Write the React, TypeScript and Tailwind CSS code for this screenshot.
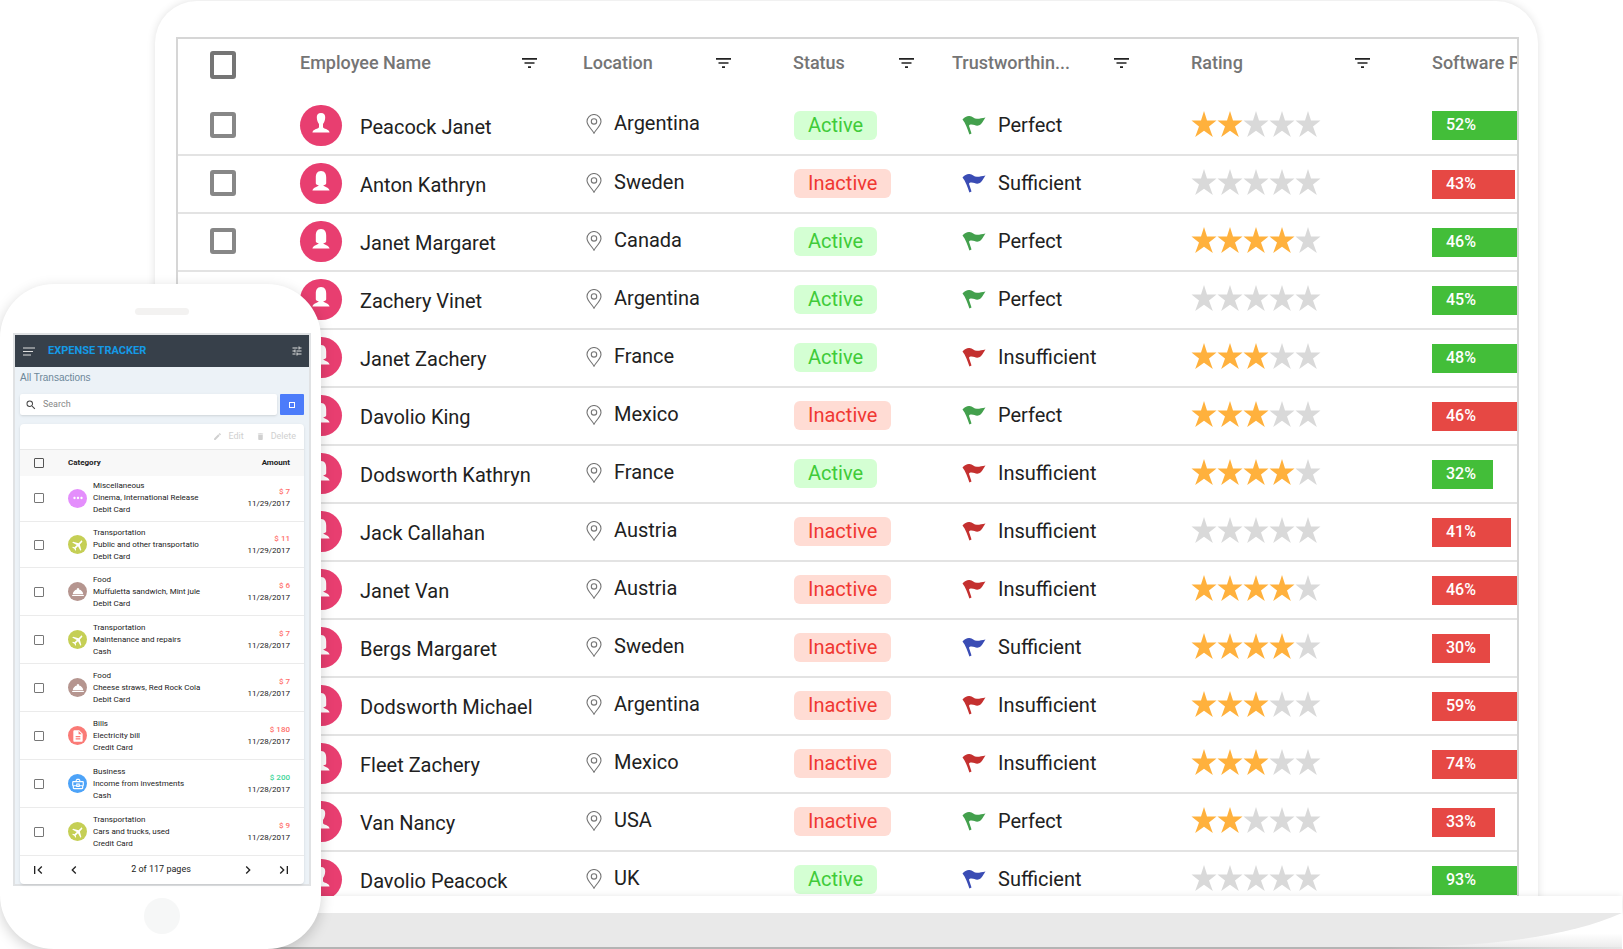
import React from "react";
import {
  MdAirplanemodeActive,
  MdChevronLeft,
  MdChevronRight,
  MdDelete,
  MdDescription,
  MdEdit,
  MdFirstPage,
  MdLastPage,
  MdMoreHoriz,
  MdOutlineBusinessCenter,
  MdRoomService,
  MdSearch,
  MdTune,
} from "react-icons/md";

type Employee = {
  name: string;
  male?: boolean;
  location: string;
  active: boolean;
  trust: "Perfect" | "Sufficient" | "Insufficient";
  rating: number;
  software: number;
  good: boolean;
};

const employees: Employee[] = [
  { name: "Peacock Janet", male: true, location: "Argentina", active: true, trust: "Perfect", rating: 2, software: 52, good: true },
  { name: "Anton Kathryn", location: "Sweden", active: false, trust: "Sufficient", rating: 0, software: 43, good: false },
  { name: "Janet Margaret", location: "Canada", active: true, trust: "Perfect", rating: 4, software: 46, good: true },
  { name: "Zachery Vinet", location: "Argentina", active: true, trust: "Perfect", rating: 0, software: 45, good: true },
  { name: "Janet Zachery", location: "France", active: true, trust: "Insufficient", rating: 3, software: 48, good: true },
  { name: "Davolio King", location: "Mexico", active: false, trust: "Perfect", rating: 3, software: 46, good: false },
  { name: "Dodsworth Kathryn", location: "France", active: true, trust: "Insufficient", rating: 4, software: 32, good: true },
  { name: "Jack Callahan", location: "Austria", active: false, trust: "Insufficient", rating: 0, software: 41, good: false },
  { name: "Janet Van", location: "Austria", active: false, trust: "Insufficient", rating: 4, software: 46, good: false },
  { name: "Bergs Margaret", location: "Sweden", active: false, trust: "Sufficient", rating: 4, software: 30, good: false },
  { name: "Dodsworth Michael", location: "Argentina", active: false, trust: "Insufficient", rating: 3, software: 59, good: false },
  { name: "Fleet Zachery", location: "Mexico", active: false, trust: "Insufficient", rating: 3, software: 74, good: false },
  { name: "Van Nancy", male: true, location: "USA", active: false, trust: "Perfect", rating: 2, software: 33, good: false },
  { name: "Davolio Peacock", male: true, location: "UK", active: true, trust: "Sufficient", rating: 0, software: 93, good: true },
];

const flagColors = {
  Perfect: "text-[#43a04d]",
  Sufficient: "text-[#3a4cb4]",
  Insufficient: "text-[#c4302f]",
};

const columns = [
  { title: "Employee Name", pad: "pr-[46px]" },
  { title: "Location", pad: "pr-[62px]" },
  { title: "Status", pad: "pr-[38px]" },
  { title: "Trustworthin...", pad: "pr-[62px]" },
  { title: "Rating", pad: "pr-[62px]" },
];

const FilterIcon = () => (
  <svg viewBox="0 0 15 10" className="w-[15px] h-[10px] text-[#222]" fill="currentColor">
    <path d="M0 0h15v1.800H0zM2.500 4.200h10v1.600h-10zM6 8.200h3v1.800H6z" />
  </svg>
);

const Avatar = ({ male }: { male?: boolean }) => (
  <span className="w-[42px] h-[41px] shrink-0 rounded-full bg-[#e83e70] flex items-center justify-center">
    <svg viewBox="0 0 18 20" className="w-[18px] h-5 mb-[5px]" fill="#fff">
      {male ? (
        <path d="M9 0C6 0 4.600 1.800 4.800 4.500C4.900 7.500 5.800 9.500 7 11V14C6.800 16 1 15.800 0.400 19.500H17.600C17 15.800 11.200 16 11 14V11C12.200 9.500 13.100 7.500 13.200 4.500C13.400 1.800 12 0 9 0Z" />
      ) : (
        <path d="M9 0C5 0 3.800 3 3.800 6.500V12C3.700 13.600 4.800 14 6.800 14.200C6 16 1.200 16 0.400 19.500H17.600C16.800 16 12 16 11.200 14.200C13.200 14 14.300 13.600 14.200 12V6.500C14.200 3 13 0 9 0Z" />
      )}
    </svg>
  </span>
);

const PinIcon = () => (
  <svg viewBox="0 0 16 20" className="w-4 h-5 shrink-0" fill="none" stroke="#757575" strokeWidth="1.100">
    <path d="M8 19.200C6.500 16 1 11.500 1 7.500a7 7 0 0 1 14 0C15 11.500 9.500 16 8 19.200Z" />
    <circle cx="8" cy="7.400" r="2.700" />
  </svg>
);

const FlagIcon = ({ className }: { className: string }) => (
  <svg viewBox="0 0 24 20" className={`w-6 h-5 shrink-0 ${className}`} fill="currentColor">
    <path d="M0.500 4.500C2.500 2 5 0.800 7.500 1C10.500 1.200 12 3.800 15 3.800C18 3.800 20 3 23.500 2.500C21.500 5 20 9.300 17.200 10.300C14 11.500 12.500 9.500 9.500 9.500C8 9.500 7.200 10 7 10.800L9.500 18.600L7.400 19.400C5.500 14 3.500 8 0.500 4.500Z" />
  </svg>
);

const Stars = ({ value }: { value: number }) => (
  <span className="flex" aria-label={`${value} of 5`}>
    {[1, 2, 3, 4, 5].map((n) => (
      <svg key={n} viewBox="0 0 26 26" className="w-[26px] h-[26px]" fill={n <= value ? "#ffb13d" : "#d9d9d9"}>
        <path d="M13 0L16 9.500H25.500L18 15.500L21.800 26L13 19.700L4.200 26L8 15.500L0.500 9.500H10Z" />
      </svg>
    ))}
  </span>
);

const EmployeeTable = () => (
  <table className="w-full table-fixed border-collapse text-left text-xl text-[#212121]">
    <colgroup>
      <col className="w-[122px]" />
      <col className="w-[283px]" />
      <col className="w-[210px]" />
      <col className="w-[159px]" />
      <col className="w-[239px]" />
      <col className="w-[241px]" />
      <col />
    </colgroup>
    <thead>
      <tr className="h-[58px] text-lg text-[#757575]">
        <th className="pl-8 pb-[6px]">
          <input type="checkbox" aria-label="Select all" className="appearance-none block w-[26px] h-7 border-4 border-[#757575] rounded-[3px]" />
        </th>
        {columns.map((col) => (
          <th key={col.title} className={`pb-[10px] font-medium ${col.pad}`}>
            <div className="flex items-center justify-between">
              {col.title}
              <button aria-label={`Filter ${col.title}`}><FilterIcon /></button>
            </div>
          </th>
        ))}
        <th className="pb-[10px] font-medium whitespace-nowrap">Software P</th>
      </tr>
    </thead>
    <tbody>
      {employees.map((e) => (
        <tr key={e.name} className="h-[58px] border-b-2 border-[#e3e3e3]">
          <td className="pl-8 pb-[2px]">
            <input type="checkbox" aria-label={`Select ${e.name}`} className="appearance-none block w-[26px] h-[26px] border-4 border-[#878787] rounded-[3px]" />
          </td>
          <td className="pb-px">
            <div className="flex items-center gap-[18px]">
              <Avatar male={e.male} />
              <span className="pt-[3px]">{e.name}</span>
            </div>
          </td>
          <td>
            <div className="flex items-center gap-3 pl-[3px] pb-[3px]">
              <PinIcon />
              <span className="pb-[2px]">{e.location}</span>
            </div>
          </td>
          <td className="pl-px pb-[2px]">
            <span className={`inline-block px-[14px] rounded-md leading-[29px] align-middle ${e.active ? "bg-[#d4ffd3] text-[#40cb39]" : "bg-[#ffdcd4] text-[#f03832]"}`}>
              {e.active ? "Active" : "Inactive"}
            </span>
          </td>
          <td className="pb-[2px]">
            <div className="flex items-center gap-3 pl-[10px]">
              <FlagIcon className={flagColors[e.trust]} />
              {e.trust}
            </div>
          </td>
          <td className="pb-1">
            <Stars value={e.rating} />
          </td>
          <td>
            <div
              className={`h-[29px] pl-[14px] text-base leading-[27px] font-medium text-white ${e.good ? "bg-[#43be39]" : "bg-[#e64844]"}`}
              style={{ width: e.software * 1.92 }}
            >
              {e.software}%
            </div>
          </td>
        </tr>
      ))}
    </tbody>
  </table>
);

const categories = {
  Miscellaneous: { icon: MdMoreHoriz, color: "bg-[#e48efc]", turn: "" },
  Transportation: { icon: MdAirplanemodeActive, color: "bg-[#c5cf55]", turn: "rotate-45" },
  Food: { icon: MdRoomService, color: "bg-[#b5958f]", turn: "" },
  Bills: { icon: MdDescription, color: "bg-[#fa7a76]", turn: "" },
  Business: { icon: MdOutlineBusinessCenter, color: "bg-[#4da3f8]", turn: "" },
};

type Transaction = { category: keyof typeof categories; note: string; payment: string; amount: number; date: string; income?: boolean };

const transactions: Transaction[] = [
  { category: "Miscellaneous", note: "Cinema, International Release", payment: "Debit Card", amount: 7, date: "11/29/2017" },
  { category: "Transportation", note: "Public and other transportatio", payment: "Debit Card", amount: 11, date: "11/29/2017" },
  { category: "Food", note: "Muffuletta sandwich, Mint jule", payment: "Debit Card", amount: 6, date: "11/28/2017" },
  { category: "Transportation", note: "Maintenance and repairs", payment: "Cash", amount: 7, date: "11/28/2017" },
  { category: "Food", note: "Cheese straws, Red Rock Cola", payment: "Debit Card", amount: 7, date: "11/28/2017" },
  { category: "Bills", note: "Electricity bill", payment: "Credit Card", amount: 180, date: "11/28/2017" },
  { category: "Business", note: "Income from investments", payment: "Cash", amount: 200, date: "11/28/2017", income: true },
  { category: "Transportation", note: "Cars and trucks, used", payment: "Credit Card", amount: 9, date: "11/28/2017" },
];

const TransactionTable = () => (
  <table className="w-full table-fixed border-collapse text-left text-[8px] leading-3 text-[#222]">
    <colgroup>
      <col className="w-12" />
      <col className="w-[140px]" />
      <col />
    </colgroup>
    <thead>
      <tr className="h-[26px] bg-[#f8f8f8] border-t border-[#e8e8e8]">
        <th className="pl-[14px]">
          <input type="checkbox" aria-label="Select all transactions" className="appearance-none block w-[10px] h-[10px] border border-[#555] rounded-[1px]" />
        </th>
        <th className="font-bold">Category</th>
        <th className="font-bold text-right pr-[14px]">Amount</th>
      </tr>
    </thead>
    <tbody>
      {transactions.map((t, i) => {
        const { icon: Icon, color, turn } = categories[t.category];
        return (
          <tr key={i} className={`border-b border-[#ebebeb] ${i < 2 ? "h-[46px]" : "h-12"}`}>
            <td className="pl-[14px]">
              <input type="checkbox" aria-label={`Select ${t.note}`} className="appearance-none block w-[10px] h-[10px] border border-[#777] rounded-[1px]" />
            </td>
            <td>
              <div className="flex items-center gap-[6px]">
                <span className={`w-[19px] h-[19px] shrink-0 rounded-full text-white flex items-center justify-center ${color}`}>
                  <Icon className={`w-[14px] h-[14px] ${turn}`} />
                </span>
                <div className="whitespace-nowrap">
                  <p>{t.category}</p>
                  <p>{t.note}</p>
                  <p>{t.payment}</p>
                </div>
              </div>
            </td>
            <td className="text-right pr-[14px]">
              <p className={`font-medium ${t.income ? "text-[#3dd598]" : "text-[#ff706b]"}`}>$ {t.amount}</p>
              <p>{t.date}</p>
            </td>
          </tr>
        );
      })}
    </tbody>
  </table>
);

const Phone = () => (
  <div className="absolute left-0 bottom-0 w-[321px] pt-6 pl-[13px] pr-[10px] pb-[15px] rounded-[54px] bg-white shadow-[0_4px_14px_rgba(0,0,0,0.18)]">
    <div className="w-[54px] h-[7px] mx-auto mb-[18px] rounded-full bg-[#f3f2f1]" />
    <div className="border-2 border-[#e0e2e4] bg-[#ecf2f7]">
      <header className="h-8 pl-2 pr-[6px] flex items-center bg-[#37404a]">
        <button aria-label="Menu">
          <svg viewBox="0 0 12 9" className="w-3 h-[9px]" fill="#ddd">
            <path d="M0 0.500h12v1H0zM0 4h10v1H0zM0 7.500h8v1H0z" />
          </svg>
        </button>
        <h1 className="ml-[13px] text-[11px] font-bold text-[#149ae6]">EXPENSE TRACKER</h1>
        <button aria-label="Settings" className="ml-auto"><MdTune className="w-3 h-3 text-[#ddd]" /></button>
      </header>
      <h2 className="px-[5px] pt-1 font-['Liberation_Sans',sans-serif] text-[10px] leading-[14px] text-[#6d8799]">All Transactions</h2>
      <div className="flex gap-[3px] px-[5px] py-[9px]">
        <label className="flex-1 h-[21px] flex items-center gap-[6px] px-[5px] rounded-xs bg-white shadow-sm">
          <MdSearch className="w-3 h-3 shrink-0 text-[#444]" />
          <input type="text" placeholder="Search" aria-label="Search" className="w-full text-[9px] outline-none placeholder:text-[#888]" />
        </label>
        <button aria-label="Filter transactions" className="w-6 h-[21px] rounded-[1px] bg-[#4c7cfa] flex items-center justify-center">
          <span className="w-[6px] h-[6px] border border-white" />
        </button>
      </div>
      <div className="mx-[5px] rounded-sm bg-white shadow-sm">
        <div className="h-[25px] pr-2 flex items-center justify-end gap-3 text-[9px] text-[#d0d0d0]">
          <button className="flex items-center gap-[6px]"><MdEdit className="w-[9px] h-[9px]" />Edit</button>
          <button className="flex items-center gap-[6px]"><MdDelete className="w-[9px] h-[9px]" />Delete</button>
        </div>
        <TransactionTable />
        <nav className="h-7 pl-[10px] pr-3 flex items-center justify-between text-[9px] text-[#222]">
          <div className="flex gap-5">
            <button aria-label="First page"><MdFirstPage className="w-4 h-4" /></button>
            <button aria-label="Previous page"><MdChevronLeft className="w-4 h-4" /></button>
          </div>
          <span>2 of 117 pages</span>
          <div className="flex gap-5">
            <button aria-label="Next page"><MdChevronRight className="w-4 h-4" /></button>
            <button aria-label="Last page"><MdLastPage className="w-4 h-4" /></button>
          </div>
        </nav>
      </div>
    </div>
    <button aria-label="Home" className="block w-9 h-9 mx-auto mt-3 rounded-full bg-[#f6f7f7]" />
  </div>
);

export default function App() {
  return (
    <main className="relative overflow-hidden bg-white font-[Roboto,sans-serif]">
      <div className="ml-[155px] mr-[85px] mt-px pt-9 pl-[21px] pr-[19px] rounded-t-[42px] bg-white shadow-[0_0_8px_rgba(0,0,0,0.12)]">
        <div className="overflow-hidden border-2 border-b-0 border-[#d6d6d6]">
          <EmployeeTable />
        </div>
      </div>

      {/* Laptop base */}
      <div className="relative -mt-[14px] ml-[71px] mr-px">
        <div className="h-[17px] bg-white shadow-[0_0_6px_rgba(0,0,0,0.1)]" />
        <div className="relative flex h-[34px] bg-linear-to-b from-white from-60% to-[#ececec]">
          <div className="flex-1 bg-[#e9e9e9]" />
          <svg viewBox="0 0 210 34" className="w-[210px] h-[34px]" fill="#e9e9e9">
            <path d="M0 0H210C160 22 90 32 0 34Z" />
          </svg>
        </div>
        <div className="h-[2px] bg-linear-to-r from-[#b4b4b4] from-85% to-[#e6e6e6]" />
      </div>

      <Phone />
    </main>
  );
}
